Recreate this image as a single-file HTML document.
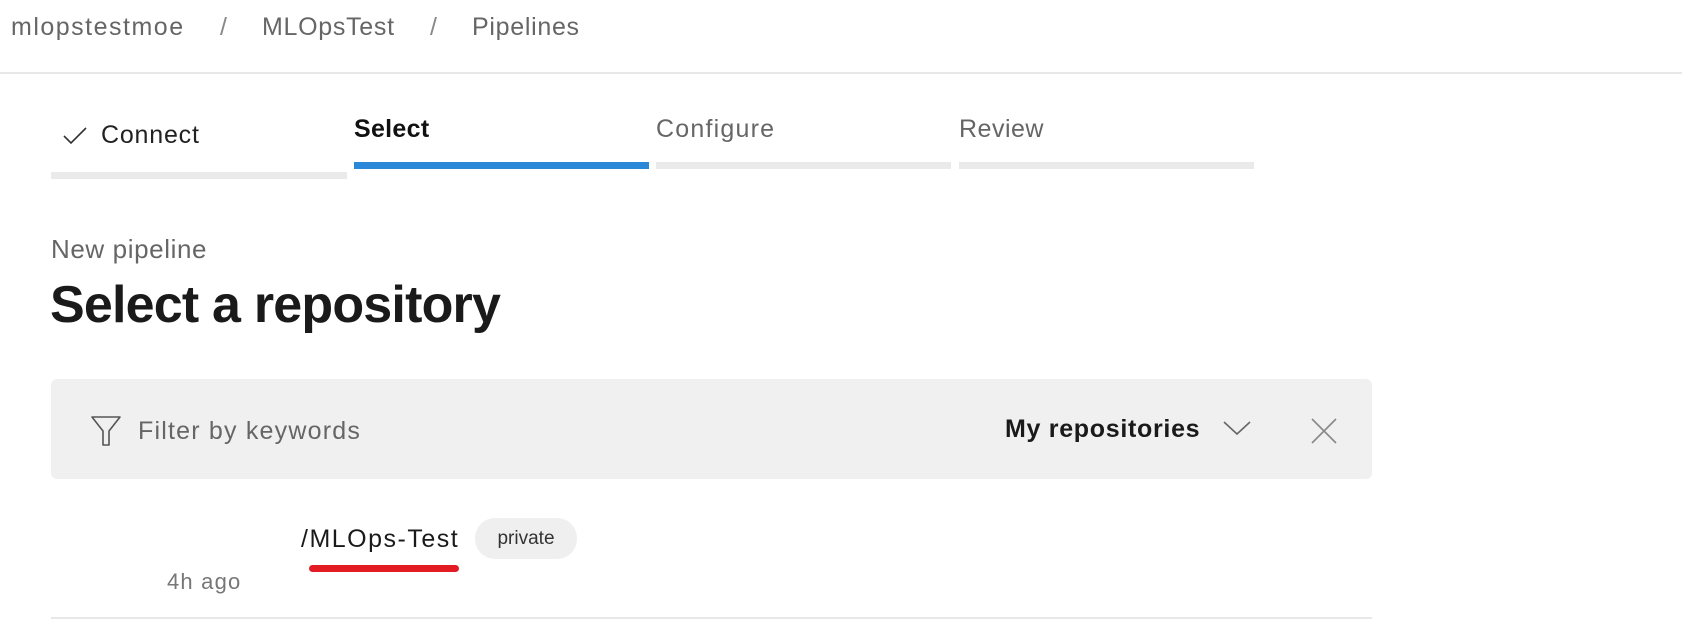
<!DOCTYPE html>
<html><head><meta charset="utf-8"><style>
html,body{margin:0;padding:0;background:#fff;width:1682px;height:626px;overflow:hidden;font-family:"Liberation Sans",sans-serif;}
.a{position:absolute;white-space:nowrap;}
</style></head><body>
<div class="a" style="left:11px;top:13px;font-size:25px;color:#666;letter-spacing:1.5px;">mlopstestmoe</div>
<div class="a" style="left:220px;top:13px;font-size:25px;color:#888;">/</div>
<div class="a" style="left:262px;top:13px;font-size:25px;color:#666;letter-spacing:0.7px;">MLOpsTest</div>
<div class="a" style="left:430px;top:13px;font-size:25px;color:#888;">/</div>
<div class="a" style="left:472px;top:13px;font-size:25px;color:#666;letter-spacing:0.7px;">Pipelines</div>
<div class="a" style="left:0;top:72px;width:1682px;height:2px;background:#e8e8e8;"></div>

<svg class="a" style="left:62px;top:126px" width="26" height="20" viewBox="0 0 26 20"><path d="M2 10 L9 17 L24 2" fill="none" stroke="#333" stroke-width="1.6"/></svg>
<div class="a" style="left:101px;top:121px;font-size:25px;color:#222;letter-spacing:0.8px;">Connect</div>
<div class="a" style="left:51px;top:172px;width:296px;height:7px;background:#eaeaea;"></div>
<div class="a" style="left:354px;top:115px;font-size:25px;color:#111;font-weight:bold;letter-spacing:0.3px;">Select</div>
<div class="a" style="left:354px;top:162px;width:295px;height:7px;background:#2b88d8;"></div>
<div class="a" style="left:656px;top:115px;font-size:25px;color:#666;letter-spacing:1.2px;">Configure</div>
<div class="a" style="left:656px;top:162px;width:295px;height:7px;background:#eaeaea;"></div>
<div class="a" style="left:959px;top:115px;font-size:25px;color:#666;letter-spacing:0.5px;">Review</div>
<div class="a" style="left:959px;top:162px;width:295px;height:7px;background:#eaeaea;"></div>

<div class="a" style="left:51px;top:234px;font-size:26px;color:#666;letter-spacing:0.6px;">New pipeline</div>
<div class="a" style="left:50px;top:275px;font-size:52px;color:#1a1a1a;font-weight:bold;letter-spacing:-0.8px;">Select a repository</div>

<div class="a" style="left:51px;top:379px;width:1321px;height:100px;background:#f0f0f0;border-radius:6px;"></div>
<svg class="a" style="left:90px;top:415px" width="32" height="32" viewBox="0 0 32 32"><path d="M2 2 H30 L19 16 V30 H13 V16 Z" fill="none" stroke="#555" stroke-width="1.6" stroke-linejoin="round"/></svg>
<div class="a" style="left:138px;top:417px;font-size:25px;color:#666;letter-spacing:1.2px;">Filter by keywords</div>
<div class="a" style="left:1005px;top:415px;font-size:25px;color:#1a1a1a;font-weight:bold;letter-spacing:0.7px;">My repositories</div>
<svg class="a" style="left:1222px;top:420px" width="30" height="16" viewBox="0 0 30 16"><path d="M2 2 L15 14 L28 2" fill="none" stroke="#666" stroke-width="1.6"/></svg>
<svg class="a" style="left:1310px;top:417px" width="28" height="28" viewBox="0 0 28 28"><path d="M2 2 L26 26 M26 2 L2 26" fill="none" stroke="#888" stroke-width="1.6"/></svg>

<div class="a" style="left:301px;top:525px;font-size:25px;color:#1a1a1a;letter-spacing:1.5px;">/MLOps-Test</div>
<div class="a" style="left:309px;top:565px;width:150px;height:7px;background:#e31b23;border-radius:4px;"></div>
<div class="a" style="left:475px;top:518px;width:102px;height:41px;background:#efefef;border-radius:20px;font-size:19px;color:#333;text-align:center;line-height:41px;">private</div>
<div class="a" style="left:167px;top:569px;font-size:22px;color:#777;letter-spacing:1.2px;">4h ago</div>
<div class="a" style="left:51px;top:617px;width:1321px;height:2px;background:#e8e8e8;"></div>
</body></html>
